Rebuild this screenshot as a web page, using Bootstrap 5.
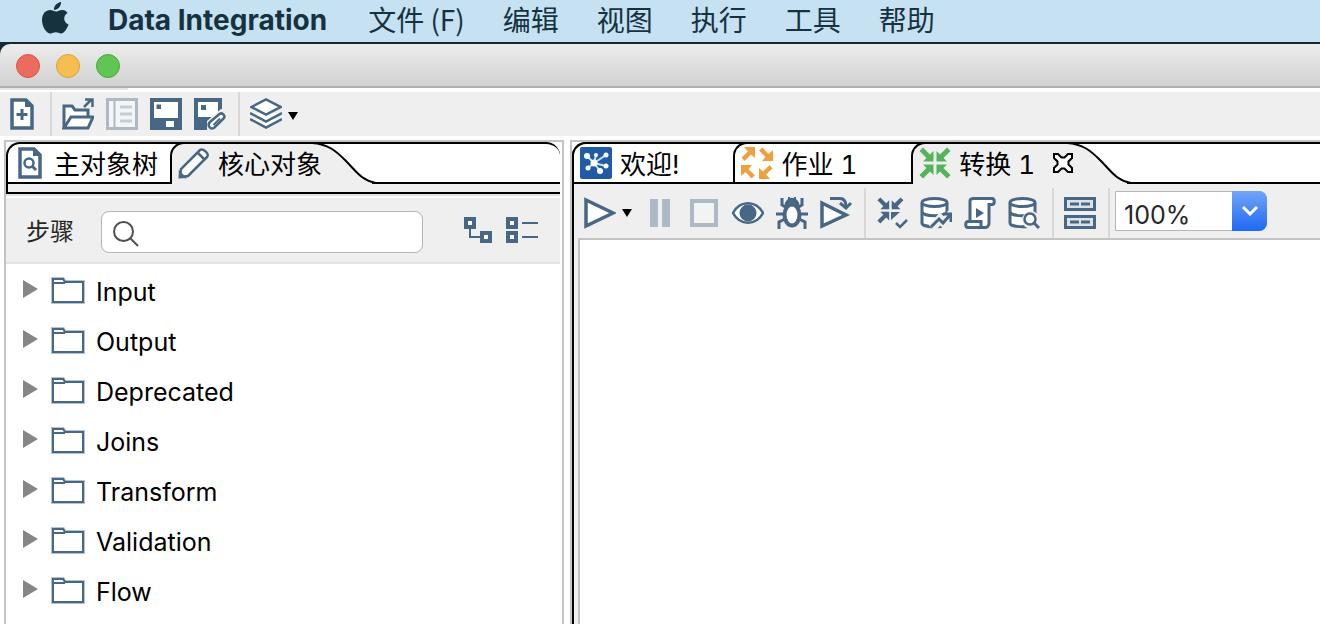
<!DOCTYPE html>
<html lang="zh-CN">
<head>
<meta charset="utf-8">
<meta name="viewport" content="width=device-width, initial-scale=1">
<title>Data Integration</title>
<link rel="stylesheet" href="https://cdn.jsdelivr.net/npm/bootstrap@5.3.0/dist/css/bootstrap.min.css">
<style>
:root { --ink:#486784; --pale:#adbac6; --chrome:#efefef; --line:#c3c3c3; --menu:#16323f; }
body { font-family:Inter,"Noto Sans CJK SC",sans-serif; color:#000; background:#fff; }
svg { display:block; flex:none; }
button { background:none; border:0; padding:0; color:inherit; }
.menubar { background:#c5e1f2; height:42px; padding:0 42px 4px; gap:38px; color:var(--menu); font-size:28px; line-height:38px; flex-wrap:nowrap; justify-content:flex-start; overflow:hidden; white-space:nowrap; }
.menubar a { color:inherit; text-decoration:none; font-family:"Noto Sans CJK SC",sans-serif; }
.menubar .app-name { font-family:Inter,sans-serif; font-weight:700; font-size:28px; padding:2px 3px 0 0; }
.window-top { background:#172832; padding-top:2px; }
.titlebar { height:44px; padding:2px 0 0 16px; gap:16px; background:linear-gradient(#ededed,#d1d1d1); border-bottom:2px solid #b0b0b0; border-top-left-radius:10px; }
.light { width:24px; height:24px; border-radius:50%; border:1px solid; }
.light-close { background:#ed6a5e; border-color:#d6544a; }
.light-min { background:#f5bf4f; border-color:#dba03b; }
.light-zoom { background:#61c554; border-color:#4ea73f; }
.under-title { height:4px; }
.under-title div { width:128px; height:2px; background:#e6e6e6; }
.tools { gap:12px; background:var(--chrome); }
.tools-main { height:44px; padding-left:6px; }
.tools-editor { height:54px; padding:4px 0 0 10px; }
.split { width:2px; margin-right:-2px; background:#d8d8d8; align-self:stretch; }
.drop { gap:6px; }
.panels { display:grid; grid-template-columns:56fr 75fr; gap:6px; padding:4px 0 0 4px; }
.pane { min-width:0; border:2px solid var(--line); border-bottom:0; }
.pane-left { padding-right:2px; }
.pane-right { border-right:0; }
.editor-frame { border-left:2px solid #000; border-top-left-radius:14px; background:var(--chrome); }
.tabstrip { height:42px; border-top:2px solid #000; background:#fff; font-size:26px; line-height:34px; white-space:nowrap; font-variant-numeric:tabular-nums; }
.pane-left .tabstrip { border-left:2px solid #000; border-radius:14px 14px 0 0; }
.pane-right .tabstrip { margin-left:-2px; border-left:2px solid #000; border-top-left-radius:14px; }
.tab { height:40px; border-bottom:2px solid #000; padding:0 12px 0 6px; gap:8px; }
.tab span { position:relative; z-index:2; padding-top:3px; }
.tab + .tab { border-left:2px solid #000; border-top:2px solid #000; border-top-left-radius:14px; margin-top:-2px; height:42px; }
.tab.current { background:var(--chrome); border-bottom:0; padding-bottom:2px; padding-right:0; }
.tab-close { margin:0 4px 0 10px; position:relative; z-index:2; }
.tab-fill { border-bottom:2px solid #000; height:40px; }
.slope { margin:-2px 0 0 -10px; position:relative; background:var(--chrome); }
.under-tabs { height:10px; border-left:2px solid #000; border-bottom:2px solid #000; background:var(--chrome); }
.under-tabs + div { height:4px; border-top:2px solid #e3e3e3; }
.step-bar { height:66px; background:var(--chrome); border-bottom:2px solid #e4e4e4; padding:4px 22px 0 20px; }
.step-bar label { font-size:24px; line-height:36px; color:#262626; margin-right:27px; }
.step-search { width:322px; }
.step-search input { height:42px; border:1px solid #b5b5b5; border-radius:8px; padding-left:44px; font-size:24px; }
.step-search svg { position:absolute; left:11px; top:9px; }
.step-actions { gap:14px; }
.tree { padding:2px 0 0 17px; font-size:25px; line-height:48px; background:#fff; }
.tree li { height:50px; }
.tree span { padding-top:2px; }
.tree .twist { margin:0 13px 4px 0; }
.tree .folder { margin:0 11px 2px 0; }
.canvas { margin-left:4px; border-left:2px solid var(--line); border-top:2px solid var(--line); background:#fff; }
.zoom-box { width:152px; margin:0 0 4px -5px; }
.zoom-box select { display:block; appearance:none; width:100%; height:40px; border:1px solid #b5b5b5; border-radius:0 8px 8px 0; background:#fff; color:#262626; font-size:25px; padding:8px 0 0 8px; line-height:30px; }
.zoom-box .chev { right:0; top:0; width:35px; height:40px; border-radius:0 8px 8px 0; background:linear-gradient(#72a4f7,#1f68f5); pointer-events:none; }
</style>
<script src="https://cdn.jsdelivr.net/npm/bootstrap@5.3.0/dist/js/bootstrap.bundle.min.js"></script>
</head>
<body class="d-flex flex-column min-vh-100">
<svg width="0" height="0" class="position-absolute" aria-hidden="true">
  <defs>
    <g id="i-arrow-out"><path d="M3 0h11v11l-4-3.500L3.500 14 .5 10.500 7 4.500z"/></g>
    <g id="i-arrow-in"><path d="M14.500 14.500H4l3.500-3.500L.5 4 4 .5l7 7L14.500 4z"/></g>
    <g id="i-folder" fill="#fff" stroke="#486784" stroke-width="2"><path d="M2 3h10l2 3h18v20H2z" stroke="#b4c2cf" stroke-width="4"/><path d="M2 3h10l2 3h18v20H2zM2 7h12"/></g>
    <g id="i-twist"><path d="M0 0l15 9L0 18z" fill="#868686"/></g>
    <g id="i-slope"><path d="M0 1h64v40C49 38 45 30 33 18 24 9 16 2 0 1z" fill="#fff"/><path d="M0 0h64v2H0zM60 40h4v2h-4z"/><path d="M0 1c16 1 24 8 33 17 12 12 16 20 31 23" fill="none" stroke="#000" stroke-width="2"/></g>
    <g id="i-db" fill="#fff" stroke="#486784" stroke-width="3"><path d="M2 6v20c0 5 25 5 25 0V6"/><ellipse cx="14.500" cy="5.500" rx="12.500" ry="4"/><path d="M2 15c1 5 24 5 25 0" fill="none"/></g>
  </defs>
</svg>

<nav class="navbar menubar" aria-label="系统菜单">
  <a href="#" aria-label="Apple"><svg width="28" height="34" viewBox="0 2 28 34" fill="currentColor"><path d="M19 2c.3 4-3 8-7 8-.4-4 3-7.500 7-8zM25.500 13c-5 3-4 9.500 1 11.500-1.500 4.500-4.500 9-7.500 9-2 0-3-1.200-5.200-1.200S10.500 33.500 8.500 33.500C4 33.500 0 26 0 20c0-6.500 4-10 8-10 2.500 0 4.500 1.600 6 1.600s3.500-1.700 6.500-1.700c2 0 4 1.100 5 3.100z"/></svg></a>
  <a href="#" class="app-name">Data Integration</a>
  <a href="#">文件 (F)</a>
  <a href="#">编辑</a>
  <a href="#">视图</a>
  <a href="#">执行</a>
  <a href="#">工具</a>
  <a href="#">帮助</a>
</nav>

<header>
  <div class="window-top">
    <div class="titlebar d-flex align-items-center">
      <button class="light light-close" aria-label="关闭"></button>
      <button class="light light-min" aria-label="最小化"></button>
      <button class="light light-zoom" aria-label="缩放"></button>
    </div>
  </div>
  <div class="under-title"><div></div></div>
  <div class="tools tools-main d-flex align-items-center" role="toolbar">
    <button aria-label="新建"><svg width="32" height="32" viewBox="0 0 32 32"><path d="M6 2h14l6 6v22H6z" fill="#fff" stroke="#486784" stroke-width="3.500"/><path d="M19 2v7h8z" fill="#486784"/><path d="M16 11v11M10.500 16.500h11" stroke="#486784" stroke-width="3"/></svg></button>
    <span class="split"></span>
    <button aria-label="打开"><svg width="32" height="32" viewBox="0 0 32 32" fill="#fff" stroke="#486784" stroke-width="3"><path d="M2 30V8h8l3 4h13v7" /><path d="M2 30l7-11h22l-5 11z"/><path d="M22 9l7-7M23 1.500h7.500V9" fill="none" stroke-width="2.500"/></svg></button>
    <button aria-label="浏览资源库" disabled><svg width="32" height="32" viewBox="0 0 32 32"><rect x="1.500" y="1.500" width="29" height="29" fill="#f3f5f7" stroke="#adbac6" stroke-width="3"/><path d="M8.500 3v26" stroke="#adbac6" stroke-width="2"/><path d="M14 9h12M14 16h12M14 23h12" stroke="#c3cdd6" stroke-width="3"/></svg></button>
    <button aria-label="保存"><svg width="32" height="32" viewBox="0 0 32 32"><path fill="#486784" d="M0 0h32v32H0z"/><path fill="#fff" d="M4 4h24v16H4zM16 23h8v6h-8z"/><path fill="#486784" d="M6.500 6.500h4.500V11H6.500z"/></svg></button>
    <button aria-label="另存为"><svg width="32" height="32" viewBox="0 0 32 32"><path fill="#486784" d="M0 0h28v32H0z"/><path fill="#fff" d="M4 4h20v15H4z"/><path fill="#486784" d="M7 7h5v5H7z"/><path d="M13 32v-9L27 11h5v21z" fill="#efefef"/><path d="M16 24l9.500-8c3-2 6.500 2 4 4.500L20 30c-4 2-7-3-4-6z" fill="#fff" stroke="#486784" stroke-width="2.500"/><path d="M19.500 27l6.500-6.500" stroke="#486784" stroke-width="2"/></svg></button>
    <span class="split"></span>
    <button class="drop d-flex align-items-center" aria-label="视角"><svg width="32" height="32" viewBox="0 0 32 32" fill="#fff" stroke="#486784" stroke-width="2.500"><path d="M0 21l16 8.500L32 21" /><path d="M0 15l16 8.500L32 15"/><path d="M1.500 9L16 1.500 30.500 9 16 16.500z"/></svg><svg class="mt-1" width="10" height="8"><path d="M0 0h10L5 8z"/></svg></button>
  </div>
</header>

<main class="panels flex-grow-1">
  <section class="pane pane-left">
    <div class="tabstrip d-flex" role="tablist">
      <button class="tab d-flex align-items-center" role="tab"><svg width="32" height="32" viewBox="0 0 32 32"><path d="M6 2h14l6 6v22H6z" fill="#fff" stroke="#486784" stroke-width="3.500"/><path d="M19 2v7h8z" fill="#486784"/><circle cx="15" cy="16" r="4.500" fill="none" stroke="#486784" stroke-width="2.500"/><path d="M18 19l4 4" stroke="#486784" stroke-width="3"/></svg><span>主对象树</span></button>
      <button class="tab current d-flex align-items-center" role="tab" aria-selected="true"><svg width="32" height="32" viewBox="0 0 32 32" fill="#fff" stroke="#486784" stroke-width="2.500"><path d="M2 30l1-8L22 3c3-2 10 4 7 7L10 29z"/><path d="M20 6l7 7" /><path d="M2 30v-4l4 4z" fill="#486784"/></svg><span>核心对象</span></button>
      <svg class="slope" width="64" height="42"><use href="#i-slope"/></svg>
      <div class="tab-fill flex-grow-1"></div>
    </div>
    <div class="under-tabs"></div><div></div>
    <div class="step-bar d-flex align-items-center">
      <label for="step-q">步骤</label>
      <div class="step-search position-relative">
        <input id="step-q" type="text" class="form-control">
        <svg width="28" height="28" viewBox="0 0 28 28" fill="none" stroke="#505050" stroke-width="2"><circle cx="11.500" cy="11.500" r="9.500"/><path d="M18 18l8 8"/></svg>
      </div>
      <div class="step-actions d-flex ms-auto mb-1">
        <button aria-label="展开全部"><svg width="28" height="28" viewBox="0 0 28 28" fill="#fff" stroke="#486784" stroke-width="4"><path d="M6 10v11h12" fill="none" stroke-width="2"/><path d="M2 3h8v8H2zM18 17h8v8h-8z"/></svg></button>
        <button aria-label="折叠全部"><svg width="32" height="28" viewBox="0 0 32 28" fill="#fff" stroke="#486784" stroke-width="4"><path d="M2 3h8v8H2zM2 17h8v8H2z"/><path d="M16 7h16M16 21h16" stroke-width="2"/></svg></button>
      </div>
    </div>
    <ul class="tree list-unstyled mb-0">
      <li class="d-flex align-items-center"><button class="twist" aria-label="展开 Input"><svg width="15" height="18"><use href="#i-twist"/></svg></button><svg class="folder" width="34" height="28"><use href="#i-folder"/></svg><span>Input</span></li>
      <li class="d-flex align-items-center"><button class="twist" aria-label="展开 Output"><svg width="15" height="18"><use href="#i-twist"/></svg></button><svg class="folder" width="34" height="28"><use href="#i-folder"/></svg><span>Output</span></li>
      <li class="d-flex align-items-center"><button class="twist" aria-label="展开 Deprecated"><svg width="15" height="18"><use href="#i-twist"/></svg></button><svg class="folder" width="34" height="28"><use href="#i-folder"/></svg><span>Deprecated</span></li>
      <li class="d-flex align-items-center"><button class="twist" aria-label="展开 Joins"><svg width="15" height="18"><use href="#i-twist"/></svg></button><svg class="folder" width="34" height="28"><use href="#i-folder"/></svg><span>Joins</span></li>
      <li class="d-flex align-items-center"><button class="twist" aria-label="展开 Transform"><svg width="15" height="18"><use href="#i-twist"/></svg></button><svg class="folder" width="34" height="28"><use href="#i-folder"/></svg><span>Transform</span></li>
      <li class="d-flex align-items-center"><button class="twist" aria-label="展开 Validation"><svg width="15" height="18"><use href="#i-twist"/></svg></button><svg class="folder" width="34" height="28"><use href="#i-folder"/></svg><span>Validation</span></li>
      <li class="d-flex align-items-center"><button class="twist" aria-label="展开 Flow"><svg width="15" height="18"><use href="#i-twist"/></svg></button><svg class="folder" width="34" height="28"><use href="#i-folder"/></svg><span>Flow</span></li>
    </ul>
  </section>

  <section class="pane pane-right d-flex flex-column">
    <div class="editor-frame d-flex flex-column flex-grow-1">
      <div class="tabstrip d-flex" role="tablist">
        <div class="tab d-flex align-items-center" role="tab"><svg width="32" height="32" viewBox="0 0 32 32"><rect width="32" height="32" rx="2" fill="#225ba5"/><path d="M14 16L7 9M14 16l2-8M14 16l12-8M14 16l12 3M14 16l6 8M14 16l-6 5" stroke="#c9e0f5" stroke-width="2"/><g fill="#fff"><circle cx="14" cy="16" r="3.500"/><circle cx="7" cy="9" r="3"/><circle cx="16" cy="8" r="2"/><circle cx="26" cy="8" r="2.500"/><circle cx="26" cy="19" r="2.500"/><circle cx="20" cy="24" r="3"/><circle cx="8" cy="21" r="2.500"/></g></svg><span>欢迎!</span><button class="tab-close invisible" aria-label="关闭"><svg width="20" height="20"></svg></button></div>
        <div class="tab d-flex align-items-center" role="tab"><svg width="32" height="32" viewBox="0 0 32 32" fill="#eea03f"><use href="#i-arrow-out"/><use href="#i-arrow-out" transform="rotate(90 16 16)"/><use href="#i-arrow-out" transform="rotate(180 16 16)"/><use href="#i-arrow-out" transform="rotate(270 16 16)"/></svg><span>作业 1</span><button class="tab-close invisible" aria-label="关闭"><svg width="20" height="20"></svg></button></div>
        <div class="tab current d-flex align-items-center" role="tab" aria-selected="true"><svg width="32" height="32" viewBox="0 0 32 32" fill="#56b35a"><use href="#i-arrow-in"/><use href="#i-arrow-in" transform="rotate(90 16 16)"/><use href="#i-arrow-in" transform="rotate(180 16 16)"/><use href="#i-arrow-in" transform="rotate(270 16 16)"/></svg><span>转换 1</span><button class="tab-close" aria-label="关闭"><svg width="20" height="20" viewBox="0 0 20 20"><path d="M1 1h4l3.500 3.500h3L15 1h4v4l-3.500 3.500v3L19 15v4h-4l-3.500-3.500h-3L5 19H1v-4l3.500-3.500v-3L1 5z" fill="#fff" stroke="#000" stroke-width="2"/></svg></button></div>
        <svg class="slope" width="64" height="42"><use href="#i-slope"/></svg>
        <div class="tab-fill flex-grow-1"></div>
      </div>
      <div class="tools tools-editor d-flex align-items-center" role="toolbar">
        <button class="drop d-flex align-items-center" aria-label="运行"><svg width="32" height="32" viewBox="0 0 32 32"><path d="M2 3l27 13L2 29z" fill="#fff" stroke="#486784" stroke-width="3.500"/></svg><svg width="10" height="8"><path d="M0 0h10L5 8z"/></svg></button>
        <button aria-label="暂停" disabled><svg width="32" height="32" fill="#adbac6"><path d="M6 2h8v28H6zM18 2h8v28h-8z"/></svg></button>
        <button aria-label="停止" disabled><svg width="32" height="32"><rect x="4" y="4" width="24" height="24" fill="#f3f3f3" stroke="#adbac6" stroke-width="4"/></svg></button>
        <button aria-label="预览"><svg width="32" height="32" viewBox="0 0 32 32"><path d="M1 16C8 3 24 3 31 16 24 29 8 29 1 16z" fill="#fff" stroke="#486784" stroke-width="2.500"/><circle cx="16" cy="16" r="8.500" fill="#486784"/></svg></button>
        <button aria-label="调试"><svg width="32" height="32" viewBox="0 0 32 32" fill="none" stroke="#486784" stroke-width="3"><path d="M6 1v7l5 3M26 1v7l-5 3M0 17h8M24 17h8M9 22l-6 3v7M23 22l6 3v7"/><path d="M10 9c0-9 12-9 12 0z" fill="#486784"/><ellipse cx="16" cy="18" rx="7.500" ry="10.500" fill="#fff" stroke-width="4"/><path d="M13 0v4M19 0v4" stroke-width="2"/></svg></button>
        <button aria-label="重放"><svg width="32" height="32" viewBox="0 0 32 32" stroke="#486784"><path d="M2 6l24 12L2 29z" fill="#fff" stroke-width="3.500"/><path d="M10 1.500h10c4 0 6 3 6 8M20 6l6 5 5-5" fill="none" stroke-width="3"/></svg></button>
        <span class="split"></span>
        <button aria-label="校验"><svg width="32" height="32" viewBox="0 0 32 32" fill="#486784"><g transform="translate(1 0) scale(.84)"><use href="#i-arrow-in"/><use href="#i-arrow-in" transform="rotate(90 16 16)"/><use href="#i-arrow-in" transform="rotate(270 16 16)"/></g><path d="M15 15h9l-9 8z"/><path d="M20 26l4 4 7-7" fill="none" stroke="#486784" stroke-width="2.500"/></svg></button>
        <button aria-label="影响分析"><svg width="32" height="32" viewBox="0 0 32 32"><use href="#i-db"/><path d="M12 31l8-9 4 4 8-10" fill="none" stroke="#efefef" stroke-width="9"/><path d="M11 30l8-8 4 4 7-8M23 17h8v8" fill="none" stroke="#486784" stroke-width="3"/></svg></button>
        <button aria-label="获取 SQL"><svg width="32" height="32" viewBox="0 0 32 32" fill="#fff" stroke="#486784" stroke-width="3"><path d="M6 24V4c0-2 2-2.500 4-2.500h18c3 0 3 6 0 6h-3V26c0 3-2 4.500-4 4.500H4c-3 0-3-6 0-6h13v5"/><path d="M12 11l8 5-8 5z" fill="#486784" stroke="none"/></svg></button>
        <button aria-label="浏览数据库"><svg width="32" height="32" viewBox="0 0 32 32"><use href="#i-db"/><circle cx="23" cy="23" r="9" fill="#efefef"/><circle cx="22" cy="22" r="5.500" fill="#fff" stroke="#486784" stroke-width="2.500"/><path d="M26 26l5 5" stroke="#486784" stroke-width="3"/></svg></button>
        <span class="split"></span>
        <button aria-label="显示结果"><svg width="32" height="32" viewBox="0 0 32 32" fill="#dce2e8" stroke="#486784" stroke-width="3"><path d="M1.500 1.500h29v11h-29zM1.500 19.500h29v11h-29z"/><path d="M6 7h9M17 7h9M6 25h9M17 25h9"/></svg></button>
        <span class="split"></span>
        <div class="zoom-box position-relative">
          <select aria-label="缩放比例"><option>100%</option><option>200%</option><option>50%</option></select>
          <span class="chev position-absolute d-flex align-items-center justify-content-center"><svg width="16" height="10" viewBox="0 0 16 10" fill="none" stroke="#fff" stroke-width="3"><path d="M1 1l7 7 7-7"/></svg></span>
        </div>
      </div>
      <div class="canvas flex-grow-1"></div>
    </div>
  </section>
</main>
</body>
</html>
